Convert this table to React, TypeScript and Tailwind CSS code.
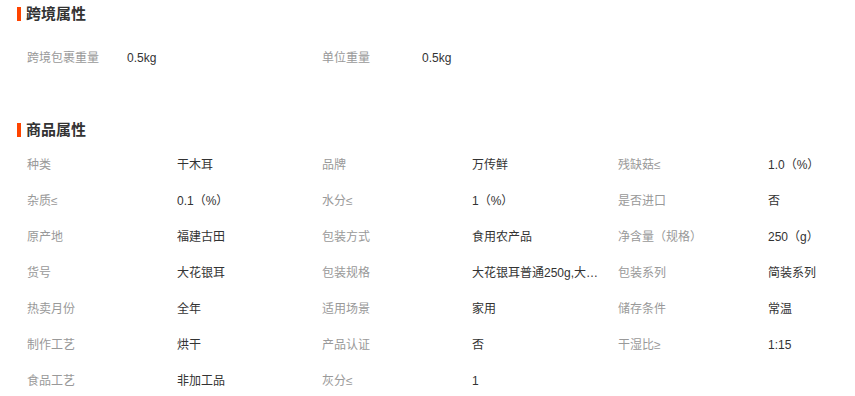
const crossBorder = [
  { label: '跨境包裹重量', value: '0.5kg' },
  { label: '单位重量', value: '0.5kg' },
];

const attrs = [
  ['种类', '干木耳'],
  ['品牌', '万传鲜'],
  ['残缺菇≤', '1.0（%）'],
  ['杂质≤', '0.1（%）'],
  ['水分≤', '1（%）'],
  ['是否进口', '否'],
  ['原产地', '福建古田'],
  ['包装方式', '食用农产品'],
  ['净含量（规格）', '250（g）'],
  ['货号', '大花银耳'],
  ['包装规格', '大花银耳普通250g,大花银耳精选250g'],
  ['包装系列', '简装系列'],
  ['热卖月份', '全年'],
  ['适用场景', '家用'],
  ['储存条件', '常温'],
  ['制作工艺', '烘干'],
  ['产品认证', '否'],
  ['干湿比≥', '1:15'],
  ['食品工艺', '非加工品'],
  ['灰分≤', '1'],
];

function SectionTitle({ title }: { title: string }) {
  return (
    <div className="flex items-center h-[14px] pl-[17px]">
      <span className="w-[4px] h-[14px] bg-[#ff4400]" />
      <span className="ml-[5px] text-[15px] font-bold text-[#333] leading-[14px]">{title}</span>
    </div>
  );
}

export default function App() {
  return (
    <div
      className="w-[855px] h-[396px] bg-white overflow-hidden text-[12px]"
      style={{ fontFamily: '"Liberation Sans", "Noto Sans CJK SC", sans-serif' }}
    >
      {/* 跨境属性 */}
      <div className="pt-[7px]">
        <SectionTitle title="跨境属性" />
      </div>
      <div className="mt-[19px] pl-[27px] flex h-[36px] items-center">
        {crossBorder.map((item) => (
          <div key={item.label} className="flex w-[295px]">
            <span className="w-[100px] text-[#999]">{item.label}</span>
            <span className="text-[#333]">{item.value}</span>
          </div>
        ))}
      </div>

      {/* 商品属性 */}
      <div className="mt-[47px]">
        <SectionTitle title="商品属性" />
      </div>
      <div className="mt-[10px] pl-[27px] grid grid-cols-[295px_296px_1fr]">
        {attrs.map(([label, value]) => (
          <div key={label} className="flex h-[36px] items-center">
            <span className="w-[150px] shrink-0 text-[#999]">{label}</span>
            <span className="w-[128px] truncate text-[#333]">{value}</span>
          </div>
        ))}
      </div>
    </div>
  );
}
